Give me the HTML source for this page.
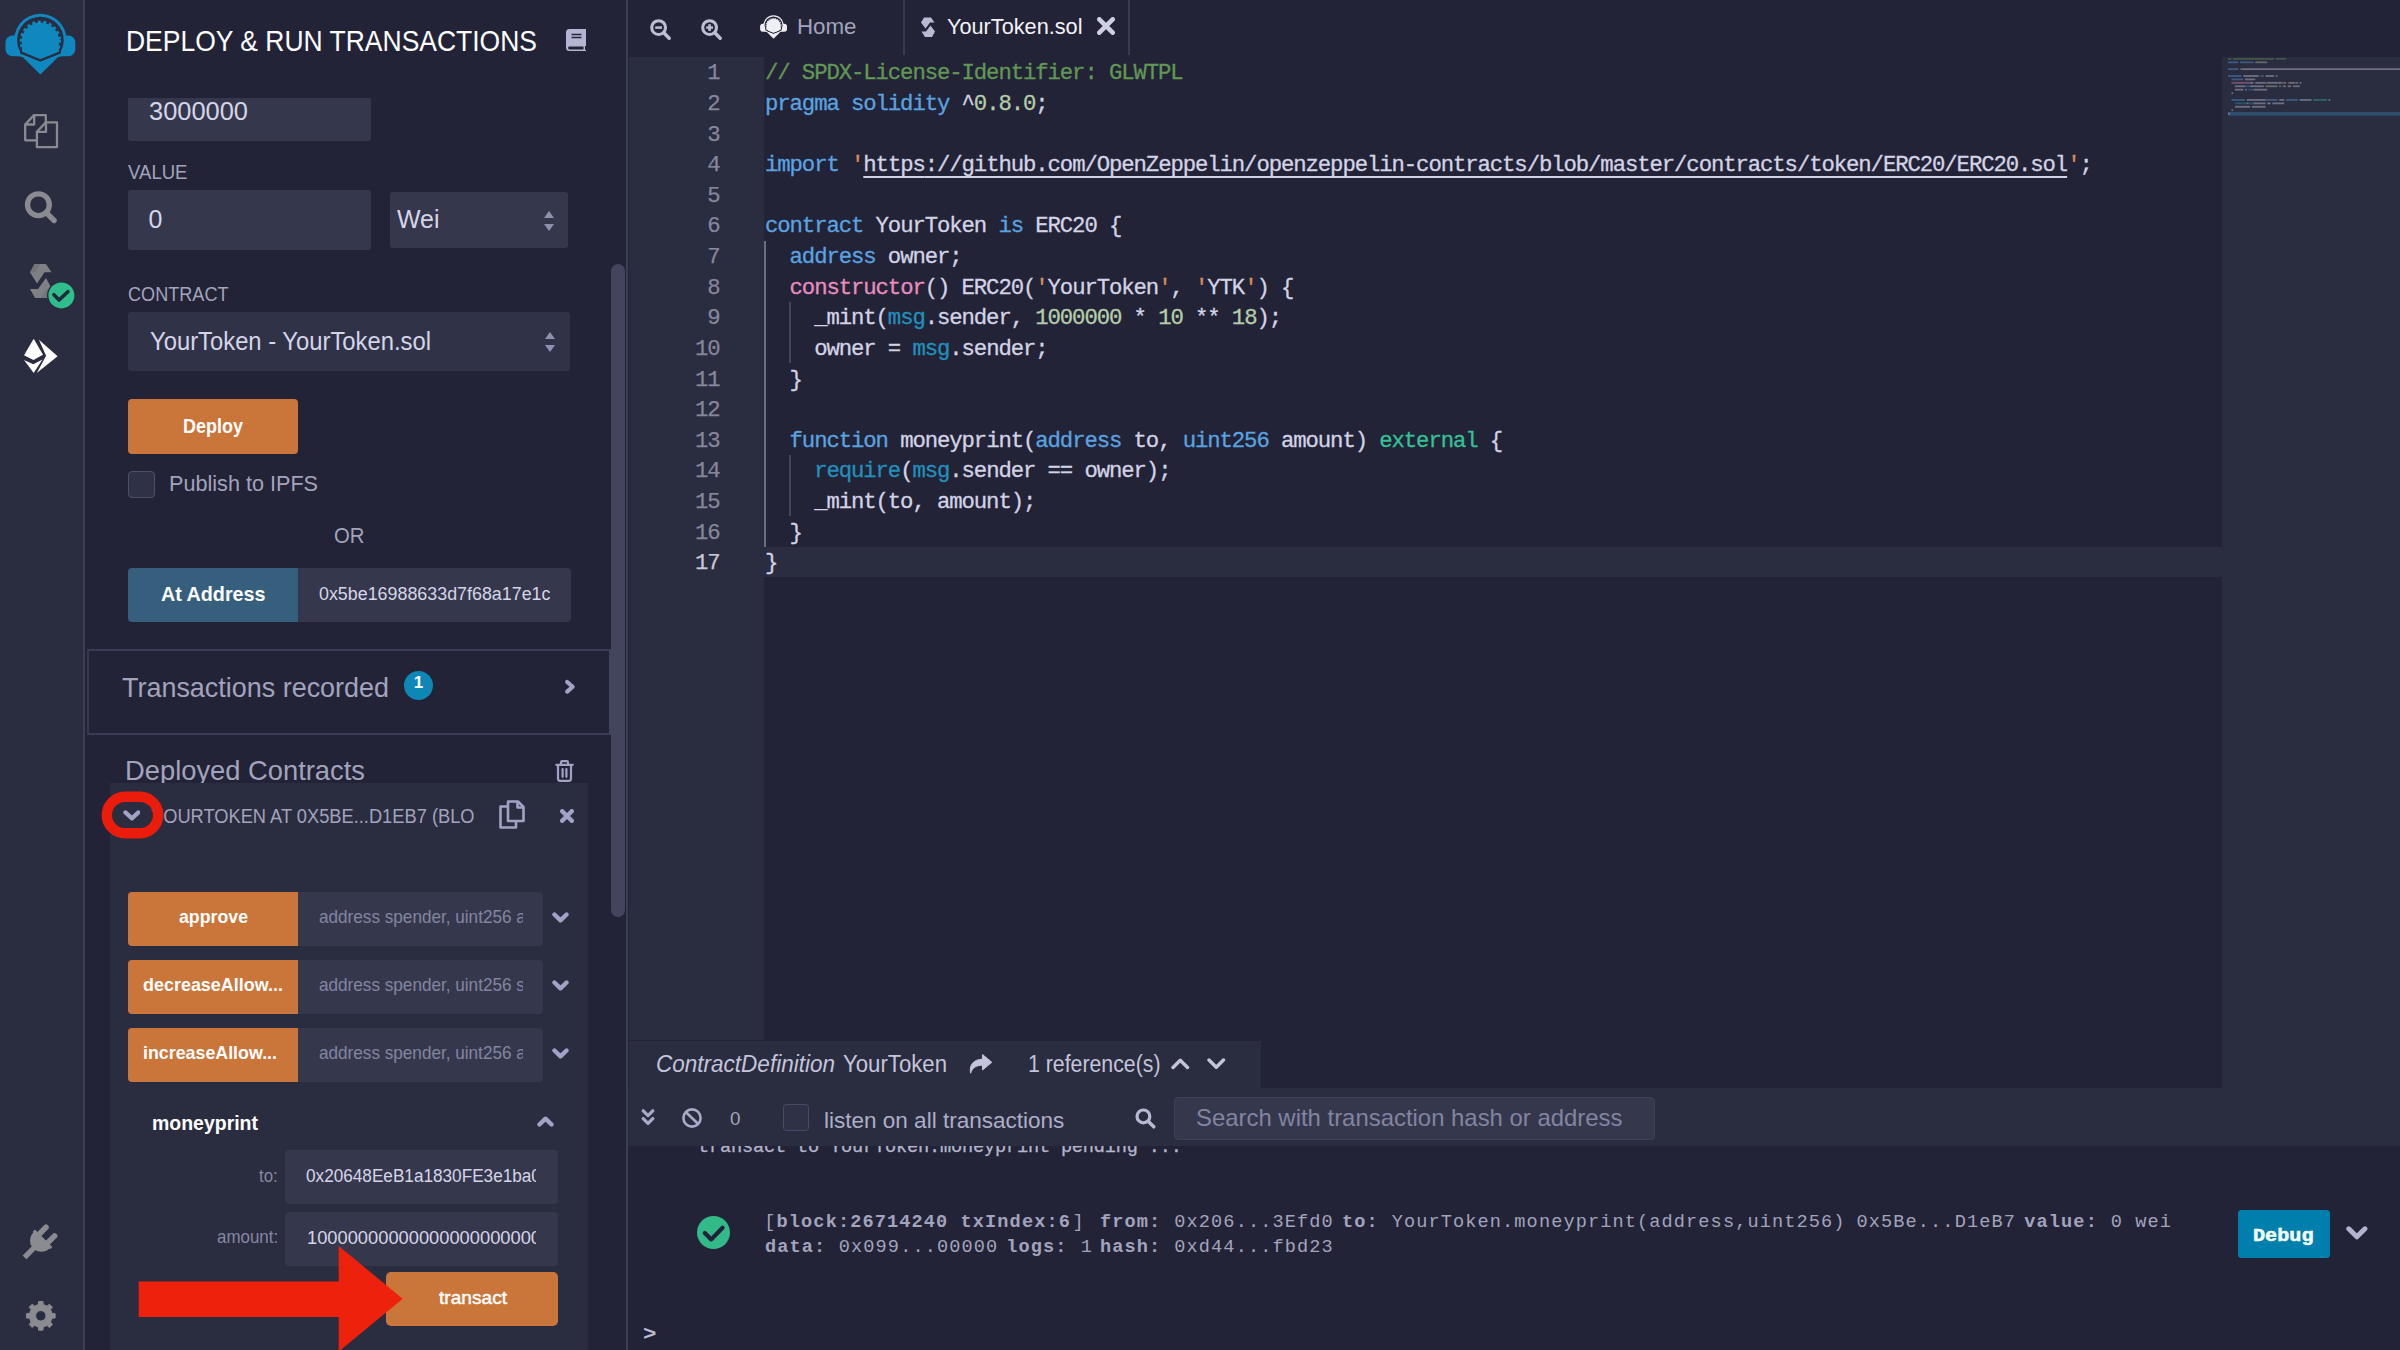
<!DOCTYPE html><html><head><meta charset="utf-8"><title>Remix</title><style>html,body{margin:0;padding:0;}body{width:2400px;height:1350px;overflow:hidden;background:#222336;position:relative;font-family:"Liberation Sans",sans-serif;}</style></head><body>
<div style="position:absolute;left:0px;top:0px;width:83px;height:1350px;background:#2a2c3f;"></div>
<div style="position:absolute;left:83px;top:0px;width:2px;height:1350px;background:#3b3e55;"></div>
<div style="position:absolute;left:626px;top:0px;width:2px;height:1350px;background:#3b3e55;"></div>
<div style="position:absolute;left:128px;top:98px;width:243px;height:43px;background:#35384c;border-radius:0 0 3px 3px;"></div>
<div id="t1" style="position:absolute;left:148.5px;top:111.34px;line-height:0;white-space:pre;font-family:'Liberation Sans', sans-serif;font-size:25px;color:#d5d5e9;font-weight:400;transform:scaleX(1.0172);transform-origin:0 0;">3000000</div>
<div id="t2" style="position:absolute;left:128px;top:172.07px;line-height:0;white-space:pre;font-family:'Liberation Sans', sans-serif;font-size:20px;color:#a2a3bd;font-weight:400;transform:scaleX(0.9281);transform-origin:0 0;">VALUE</div>
<div style="position:absolute;left:128px;top:190px;width:243px;height:60px;background:#35384c;border-radius:3px;"></div>
<div id="t3" style="position:absolute;left:148.5px;top:218.84px;line-height:0;white-space:pre;font-family:'Liberation Sans', sans-serif;font-size:25px;color:#d5d5e9;font-weight:400;">0</div>
<div style="position:absolute;left:390px;top:192px;width:178px;height:56px;background:#35384c;border-radius:3px;"></div>
<div id="t4" style="position:absolute;left:397px;top:218.84px;line-height:0;white-space:pre;font-family:'Liberation Sans', sans-serif;font-size:25px;color:#d5d5e9;font-weight:400;transform:scaleX(0.9974);transform-origin:0 0;">Wei</div>
<svg style="position:absolute;left:543px;top:209.5px;" width="12" height="22" viewBox="0 0 12 22"><path d="M6 1 L11 8 L1 8 Z M1 14 L11 14 L6 21 Z" fill="#8f90b0"/></svg>
<div id="t5" style="position:absolute;left:128px;top:294.07px;line-height:0;white-space:pre;font-family:'Liberation Sans', sans-serif;font-size:20px;color:#a2a3bd;font-weight:400;transform:scaleX(0.9045);transform-origin:0 0;">CONTRACT</div>
<div style="position:absolute;left:128px;top:312px;width:442px;height:59px;background:#303348;border-radius:3px;"></div>
<div id="t6" style="position:absolute;left:150px;top:340.84px;line-height:0;white-space:pre;font-family:'Liberation Sans', sans-serif;font-size:25px;color:#d5d5e9;font-weight:400;transform:scaleX(0.9521);transform-origin:0 0;">YourToken - YourToken.sol</div>
<svg style="position:absolute;left:543.5px;top:331px;" width="12" height="22" viewBox="0 0 12 22"><path d="M6 1 L11 8 L1 8 Z M1 14 L11 14 L6 21 Z" fill="#8f90b0"/></svg>
<div style="position:absolute;left:128px;top:399px;width:170px;height:54.5px;background:#ca7539;border-radius:4px;"></div>
<div id="t7" style="position:absolute;left:183px;top:425.54px;line-height:0;white-space:pre;font-family:'Liberation Sans', sans-serif;font-size:19.8px;color:#fff;font-weight:700;transform:scaleX(0.9097);transform-origin:0 0;">Deploy</div>
<div style="position:absolute;left:128px;top:471px;width:26.8px;height:26.8px;background:#2f3247;box-sizing:border-box;border:1.6px solid #4d506b;border-radius:4px;"></div>
<div id="t8" style="position:absolute;left:169.3px;top:484.41px;line-height:0;white-space:pre;font-family:'Liberation Sans', sans-serif;font-size:21.9px;color:#a2a3bd;font-weight:400;transform:scaleX(0.9876);transform-origin:0 0;">Publish to IPFS</div>
<div id="t9" style="position:absolute;left:333.5px;top:536.25px;line-height:0;white-space:pre;font-family:'Liberation Sans', sans-serif;font-size:21.8px;color:#a2a3bd;font-weight:400;transform:scaleX(0.9326);transform-origin:0 0;">OR</div>
<div style="position:absolute;left:128px;top:568px;width:170px;height:54px;background:#355f7d;border-radius:4px 0 0 4px;"></div>
<div id="t10" style="position:absolute;left:161.3px;top:594.02px;line-height:0;white-space:pre;font-family:'Liberation Sans', sans-serif;font-size:21px;color:#fff;font-weight:700;transform:scaleX(0.9393);transform-origin:0 0;">At Address</div>
<div style="position:absolute;left:298px;top:568px;width:272.5px;height:54px;background:#35384c;border-radius:0 4px 4px 0;"></div>
<div style="position:absolute;left:318px;top:568px;width:232px;height:54px;overflow:hidden;">
<div id="t11" style="position:absolute;left:0.7px;top:25.96px;line-height:0;white-space:pre;font-family:'Liberation Sans', sans-serif;font-size:18px;color:#d5d5e9;font-weight:400;transform:scaleX(0.9924);transform-origin:0 0;">0x5be16988633d7f68a17e1cd</div>
</div>
<div style="position:absolute;left:87px;top:649.1px;width:524.3px;height:86.2px;background:transparent;box-sizing:border-box;border-top:2.5px solid #3a3d55;border-bottom:2.5px solid #3a3d55;border-left:2px solid #353850;border-right:2px solid #42455d;"></div>
<div id="t12" style="position:absolute;left:122.3px;top:687.19px;line-height:0;white-space:pre;font-family:'Liberation Sans', sans-serif;font-size:28.3px;color:#a2a3bd;font-weight:400;transform:scaleX(0.9519);transform-origin:0 0;">Transactions recorded</div>
<div style="position:absolute;left:403.7px;top:670.8px;width:29.2px;height:29.2px;border-radius:50%;background:#0f87b6;"></div>
<div id="t13" style="position:absolute;left:413.8px;top:682.61px;line-height:0;white-space:pre;font-family:'Liberation Sans', sans-serif;font-size:17px;color:#fff;font-weight:700;">1</div>
<svg style="position:absolute;left:563px;top:678px;" width="14" height="18" viewBox="0 0 14 18"><path d="M4.2 4 L9.6 8.8 L4.2 13.6" fill="none" stroke="#a2a3c4" stroke-width="4.2" stroke-linecap="round" stroke-linejoin="round"/></svg>
<div id="t14" style="position:absolute;left:125px;top:771.14px;line-height:0;white-space:pre;font-family:'Liberation Sans', sans-serif;font-size:27.3px;color:#a2a3bd;font-weight:400;transform:scaleX(1.0011);transform-origin:0 0;">Deployed Contracts</div>
<svg style="position:absolute;left:555px;top:760px;" width="19" height="22" viewBox="0 0 19 22"><g fill="none" stroke="#a2a3c4" stroke-width="2.2" stroke-linejoin="round" stroke-linecap="round"><path d="M1.3 4.8 H17.7"/><path d="M6 4.5 V2.4 a1.2 1.2 0 0 1 1.2 -1.2 h4.6 a1.2 1.2 0 0 1 1.2 1.2 V4.5"/><path d="M3 5 V18.8 a2 2 0 0 0 2 2 h9 a2 2 0 0 0 2 -2 V5"/><path d="M7.6 9 V16.8 M11.4 9 V16.8"/></g></svg>
<div style="position:absolute;left:110px;top:783px;width:478px;height:567px;background:#2a2c3f;"></div>
<svg style="position:absolute;left:122.5px;top:809.8px;" width="17.8" height="11" viewBox="0 0 17.8 11"><path d="M2.4 2.4 L8.9 8.4 L15.4 2.4" fill="none" stroke="#a2a3c4" stroke-width="4.2" stroke-linecap="round" stroke-linejoin="round"/></svg>
<div id="t15" style="position:absolute;left:150.5px;top:815.57px;line-height:0;white-space:pre;font-family:'Liberation Sans', sans-serif;font-size:20px;color:#a2a3bd;font-weight:400;transform:scaleX(0.9133);transform-origin:0 0;">YOURTOKEN AT 0X5BE...D1EB7 (BLO</div>
<svg style="position:absolute;left:95px;top:785px;" width="75" height="60" viewBox="0 0 75 60"><rect x="11.8" y="11.7" width="51.4" height="36.6" rx="18.3" ry="18.3" fill="none" stroke="#ec1c0d" stroke-width="10.4"/></svg>
<svg style="position:absolute;left:499px;top:800px;" width="26" height="29" viewBox="0 0 26 29"><g fill="none" stroke="#a2a3c4" stroke-width="2.6" stroke-linejoin="round"><path d="M9 1.5 H19 L24.5 7 V21 H9 Z"/><path d="M18.5 1.5 V7.5 H24.5"/><path d="M9 6.5 H1.5 V27.5 H17 V21"/></g></svg>
<svg style="position:absolute;left:559.8px;top:808.8px;" width="14" height="14" viewBox="0 0 14 14"><path d="M2.2 2.2 L11.8 11.8 M11.8 2.2 L2.2 11.8" stroke="#a2a3c4" stroke-width="4.4" stroke-linecap="round"/></svg>
<div style="position:absolute;left:128px;top:891.5px;width:170px;height:54px;background:#ca7539;border-radius:4px 0 0 4px;"></div>
<div id="t16" style="position:absolute;left:179px;top:916.92px;line-height:0;white-space:pre;font-family:'Liberation Sans', sans-serif;font-size:19px;color:#fff;font-weight:700;transform:scaleX(0.9334);transform-origin:0 0;">approve</div>
<div style="position:absolute;left:298px;top:891.5px;width:245px;height:54px;background:#35384c;border-radius:0 4px 4px 0;"></div>
<div style="position:absolute;left:318px;top:891.5px;width:205px;height:54px;overflow:hidden;">
<div id="t17" style="position:absolute;left:1.2px;top:25.59px;line-height:0;white-space:pre;font-family:'Liberation Sans', sans-serif;font-size:18.5px;color:#8385a1;font-weight:400;transform:scaleX(0.9266);transform-origin:0 0;">address spender, uint256 am</div>
</div>
<svg style="position:absolute;left:551.8px;top:911.5px;" width="17" height="11" viewBox="0 0 17 11"><path d="M2.4499999999999997 2.4499999999999997 L8.5 8.35 L14.549999999999999 2.4499999999999997" fill="none" stroke="#a2a3c4" stroke-width="4.3" stroke-linecap="round" stroke-linejoin="round"/></svg>
<div style="position:absolute;left:128px;top:959.5px;width:170px;height:54px;background:#ca7539;border-radius:4px 0 0 4px;"></div>
<div id="t18" style="position:absolute;left:143px;top:984.92px;line-height:0;white-space:pre;font-family:'Liberation Sans', sans-serif;font-size:19px;color:#fff;font-weight:700;transform:scaleX(0.9446);transform-origin:0 0;">decreaseAllow...</div>
<div style="position:absolute;left:298px;top:959.5px;width:245px;height:54px;background:#35384c;border-radius:0 4px 4px 0;"></div>
<div style="position:absolute;left:318px;top:959.5px;width:205px;height:54px;overflow:hidden;">
<div id="t19" style="position:absolute;left:1.2px;top:25.59px;line-height:0;white-space:pre;font-family:'Liberation Sans', sans-serif;font-size:18.5px;color:#8385a1;font-weight:400;transform:scaleX(0.9266);transform-origin:0 0;">address spender, uint256 su</div>
</div>
<svg style="position:absolute;left:551.8px;top:979.5px;" width="17" height="11" viewBox="0 0 17 11"><path d="M2.4499999999999997 2.4499999999999997 L8.5 8.35 L14.549999999999999 2.4499999999999997" fill="none" stroke="#a2a3c4" stroke-width="4.3" stroke-linecap="round" stroke-linejoin="round"/></svg>
<div style="position:absolute;left:128px;top:1027.5px;width:170px;height:54px;background:#ca7539;border-radius:4px 0 0 4px;"></div>
<div id="t20" style="position:absolute;left:143px;top:1052.92px;line-height:0;white-space:pre;font-family:'Liberation Sans', sans-serif;font-size:19px;color:#fff;font-weight:700;transform:scaleX(0.9376);transform-origin:0 0;">increaseAllow...</div>
<div style="position:absolute;left:298px;top:1027.5px;width:245px;height:54px;background:#35384c;border-radius:0 4px 4px 0;"></div>
<div style="position:absolute;left:318px;top:1027.5px;width:205px;height:54px;overflow:hidden;">
<div id="t21" style="position:absolute;left:1.2px;top:25.59px;line-height:0;white-space:pre;font-family:'Liberation Sans', sans-serif;font-size:18.5px;color:#8385a1;font-weight:400;transform:scaleX(0.9264);transform-origin:0 0;">address spender, uint256 ad</div>
</div>
<svg style="position:absolute;left:551.8px;top:1047.5px;" width="17" height="11" viewBox="0 0 17 11"><path d="M2.4499999999999997 2.4499999999999997 L8.5 8.35 L14.549999999999999 2.4499999999999997" fill="none" stroke="#a2a3c4" stroke-width="4.3" stroke-linecap="round" stroke-linejoin="round"/></svg>
<div id="t22" style="position:absolute;left:152px;top:1122.57px;line-height:0;white-space:pre;font-family:'Liberation Sans', sans-serif;font-size:20px;color:#fff;font-weight:700;transform:scaleX(0.9733);transform-origin:0 0;">moneyprint</div>
<svg style="position:absolute;left:536.5px;top:1115.5px;" width="17" height="11" viewBox="0 0 17 11"><path d="M2.4499999999999997 8.549999999999999 L8.5 2.65 L14.549999999999999 8.549999999999999" fill="none" stroke="#a2a3c4" stroke-width="4.3" stroke-linecap="round" stroke-linejoin="round"/></svg>
<div id="t23" style="position:absolute;left:259.4px;top:1175.92px;line-height:0;white-space:pre;font-family:'Liberation Sans', sans-serif;font-size:19px;color:#8687a2;font-weight:400;transform:scaleX(0.8852);transform-origin:0 0;">to:</div>
<div style="position:absolute;left:285px;top:1150px;width:272.5px;height:54px;background:#35384c;border-radius:4px;"></div>
<div style="position:absolute;left:305px;top:1150px;width:230.8px;height:54px;overflow:hidden;">
<div id="t24" style="position:absolute;left:0.8px;top:26.26px;line-height:0;white-space:pre;font-family:'Liberation Sans', sans-serif;font-size:18px;color:#d5d5e9;font-weight:400;transform:scaleX(0.9540);transform-origin:0 0;">0x20648EeB1a1830FE3e1ba0</div>
</div>
<div id="t25" style="position:absolute;left:216.9px;top:1237.22px;line-height:0;white-space:pre;font-family:'Liberation Sans', sans-serif;font-size:19px;color:#8687a2;font-weight:400;transform:scaleX(0.8914);transform-origin:0 0;">amount:</div>
<div style="position:absolute;left:285px;top:1212px;width:272.5px;height:54px;background:#35384c;border-radius:4px;"></div>
<div style="position:absolute;left:305px;top:1212px;width:230.8px;height:54px;overflow:hidden;">
<div id="t26" style="position:absolute;left:1.8px;top:25.76px;line-height:0;white-space:pre;font-family:'Liberation Sans', sans-serif;font-size:18px;color:#d5d5e9;font-weight:400;transform:scaleX(1.0163);transform-origin:0 0;">10000000000000000000000</div>
</div>
<div style="position:absolute;left:386px;top:1272.3px;width:171.5px;height:54px;background:#ca7539;border-radius:5px;"></div>
<div id="t27" style="position:absolute;left:438.7px;top:1298.49px;line-height:0;white-space:pre;font-family:'Liberation Sans', sans-serif;font-size:18.2px;color:#fff;font-weight:400;transform:scaleX(1.0510);transform-origin:0 0;-webkit-text-stroke:0.45px #fff;">transact</div>
<svg style="position:absolute;left:130px;top:1240px;" width="280" height="110" viewBox="0 0 280 110"><path d="M8.7 41.5 H208.7 V6 L272.7 58.8 L208.7 111.6 V77 H8.7 Z" fill="#ee220c"/></svg>
<div style="position:absolute;left:611px;top:264px;width:13.9px;height:652.6px;background:#42455d;border-radius:7px;"></div>
<div style="position:absolute;left:85px;top:0px;width:541px;height:98px;background:#222336;"></div>
<div id="t28" style="position:absolute;left:126px;top:40.95px;line-height:0;white-space:pre;font-family:'Liberation Sans', sans-serif;font-size:29px;color:#fff;font-weight:400;transform:scaleX(0.9130);transform-origin:0 0;">DEPLOY &amp; RUN TRANSACTIONS</div>
<svg style="position:absolute;left:566px;top:29px;" width="20" height="22" viewBox="0 0 20 22"><path d="M3.5 0 H20 V17 H19 V21 H20 V22 H3.5 A3.5 3.5 0 0 1 0 18.5 V3.5 A3.5 3.5 0 0 1 3.5 0 Z" fill="#b4b5d2"/><path d="M5.5 5.5 H15.5 M5.5 8.5 H15.5" stroke="#222336" stroke-width="1.6"/><path d="M3.5 17.6 H17.5 V20.4 H3.5 A1.4 1.4 0 0 1 3.5 17.6 Z" fill="#222336"/></svg>
<svg style="position:absolute;left:0px;top:0px;" width="80" height="80" viewBox="0 0 80 80"><g transform="scale(1)"><g fill="#0e88bf"><path d="M12.5 35.5 H20 V56.3 H12.5 A7 7 0 0 1 5.5 49.3 V42.5 A7 7 0 0 1 12.5 35.5 Z"/><path d="M68.3 35.5 H60.8 V56.3 H68.3 A7 7 0 0 0 75.3 49.3 V42.5 A7 7 0 0 0 68.3 35.5 Z"/><path d="M15.2 47 A26.2 26.2 0 1 1 65.6 47 Z"/><path d="M17 55.8 L20.5 53.5 L40.4 61.6 L60.3 53.5 L63.8 55.8 L57.9 57.2 L40.4 74.4 L22.9 57.2 Z"/></g><clipPath id="lg0"><path d="M0 0 H80 V48 L62.5 52.6 L40.4 61.6 L18.3 52.6 L0 48 Z"/></clipPath><circle cx="40.4" cy="40" r="23.3" fill="#2a2c3f" clip-path="url(#lg0)"/><clipPath id="lc0"><path d="M0 0 H80 V46 L60.3 50.9 L40.4 58.9 L20.5 50.9 L0 46 Z"/></clipPath><g clip-path="url(#lc0)"><circle cx="40.4" cy="41.3" r="18.8" fill="#0e88bf"/><circle cx="40.4" cy="41.3" r="19.4" fill="none" stroke="#0e88bf" stroke-width="2.6" stroke-dasharray="2.9 2.7" transform="rotate(-4 40.4 41.3)"/><rect x="22" y="46" width="37" height="16" fill="#0e88bf"/></g></g></svg>
<svg style="position:absolute;left:20px;top:110px;" width="44" height="42" viewBox="0 0 44 42"><g fill="none" stroke="#8a8b90" stroke-width="2.3" stroke-linejoin="round" stroke-linecap="round"><path d="M5.2 14.5 L14 5.1 H25.8 V12.2 M16.5 30.3 H5.2 V14.5 H14.2 V5.1"/><path d="M16.9 21.8 L25.8 12.4 H37 V37.2 H16.9 Z"/><path d="M16.9 21.9 H26 V12.4"/></g></svg>
<svg style="position:absolute;left:20px;top:186px;" width="44" height="44" viewBox="0 0 44 44"><circle cx="18.4" cy="18.7" r="10.9" fill="none" stroke="#8a8b90" stroke-width="5.3"/><path d="M27 27.4 L34.1 34.5" stroke="#8a8b90" stroke-width="5.4" stroke-linecap="round"/></svg>
<svg style="position:absolute;left:24px;top:258px;" width="56" height="56" viewBox="0 0 56 56"><path d="M6 14.3 L10.5 6 H22 L27.5 14.3 H20.5 L13 25.5 Z" fill="#7f8086"/><path d="M6.3 14.3 L10.5 6 H16.2 L11.8 14.3Z" fill="#74757b"/><path d="M28 31 L23.5 40 H11 L6 31 H14 L22 20 Z" fill="#7f8086"/><path d="M27.7 31 L23.5 40 H17.3 L22 31Z" fill="#74757b"/><circle cx="37.4" cy="37.4" r="14.4" fill="#2a2c3f"/><circle cx="37.4" cy="37.4" r="13" fill="#30bd8c"/><path d="M29.9 36.7 L35.1 42 L43.9 33.7" fill="none" stroke="#1f2a38" stroke-width="3.6" stroke-linecap="round" stroke-linejoin="round"/></svg>
<svg style="position:absolute;left:20px;top:334px;" width="44" height="44" viewBox="0 0 44 44"><g fill="#fff"><path d="M13.7 4.7 L4 21.3 L13.5 26 L23 20.7 Z"/><path d="M4 26 L13.3 30.2 L22.5 25.4 L13.7 38.9 Z"/><path d="M18.9 5.7 L37.6 22.3 L16.8 38.9 L26.1 21.8 Z"/></g></svg>
<svg style="position:absolute;left:16px;top:1216px;" width="50" height="50" viewBox="0 0 50 50"><g transform="translate(26.3 23.6) rotate(45) scale(1.07)" fill="#8a8b90" stroke="none"><rect x="-8.3" y="-13.2" width="5.2" height="14" rx="2.6"/><rect x="3.1" y="-13.2" width="5.2" height="14" rx="2.6"/><path d="M-11.5 -1.8 H11.5 V1.2 H10.6 A10.6 10.6 0 0 1 -10.6 1.2 H-11.5 Z"/><rect x="-2.5" y="9" width="5" height="14.5"/></g></svg>
<svg style="position:absolute;left:20px;top:1295px;" width="42" height="42" viewBox="0 0 42 42"><path d="M18.38 9.56 L18.64 6.46 L22.96 6.46 L23.22 9.56 L27.04 11.14 L29.41 9.14 L32.46 12.19 L30.46 14.56 L32.04 18.38 L35.14 18.64 L35.14 22.96 L32.04 23.22 L30.46 27.04 L32.46 29.41 L29.41 32.46 L27.04 30.46 L23.22 32.04 L22.96 35.14 L18.64 35.14 L18.38 32.04 L14.56 30.46 L12.19 32.46 L9.14 29.41 L11.14 27.04 L9.56 23.22 L6.46 22.96 L6.46 18.64 L9.56 18.38 L11.14 14.56 L9.14 12.19 L12.19 9.14 L14.56 11.14 Z M15.600000000000001 20.8 a5.2 5.2 0 1 0 10.4 0 a5.2 5.2 0 1 0 -10.4 0 Z" fill="#8a8b90" fill-rule="evenodd" stroke="#8a8b90" stroke-width="1" stroke-linejoin="round"/></svg>
<svg style="position:absolute;left:649.7px;top:19.2px;" width="23" height="23" viewBox="0 0 23 23"><circle cx="8.6" cy="8.6" r="6.9" fill="none" stroke="#bdbdd6" stroke-width="3.1"/><path d="M13.8 13.8 L19.2 19.2" stroke="#bdbdd6" stroke-width="3.5" stroke-linecap="round"/><path d="M5.2 8.6 H12 " stroke="#bdbdd6" stroke-width="2.5"/></svg>
<svg style="position:absolute;left:700.8px;top:19.2px;" width="23" height="23" viewBox="0 0 23 23"><circle cx="8.6" cy="8.6" r="6.9" fill="none" stroke="#bdbdd6" stroke-width="3.1"/><path d="M13.8 13.8 L19.2 19.2" stroke="#bdbdd6" stroke-width="3.5" stroke-linecap="round"/><path d="M5.2 8.6 H12 " stroke="#bdbdd6" stroke-width="2.5"/><path d="M8.6 5.2 V12" stroke="#bdbdd6" stroke-width="2.5"/></svg>
<svg style="position:absolute;left:757.5px;top:9.5px;" width="30.8" height="30.8" viewBox="0 0 30.8 30.8"><g transform="scale(0.385)"><g fill="#eeeef5"><path d="M12.5 35.5 H20 V56.3 H12.5 A7 7 0 0 1 5.5 49.3 V42.5 A7 7 0 0 1 12.5 35.5 Z"/><path d="M68.3 35.5 H60.8 V56.3 H68.3 A7 7 0 0 0 75.3 49.3 V42.5 A7 7 0 0 0 68.3 35.5 Z"/><path d="M15.2 47 A26.2 26.2 0 1 1 65.6 47 Z"/><path d="M17 55.8 L20.5 53.5 L40.4 61.6 L60.3 53.5 L63.8 55.8 L57.9 57.2 L40.4 74.4 L22.9 57.2 Z"/></g><clipPath id="lg757"><path d="M0 0 H80 V48 L62.5 52.6 L40.4 61.6 L18.3 52.6 L0 48 Z"/></clipPath><circle cx="40.4" cy="40" r="23.3" fill="#222336" clip-path="url(#lg757)"/><clipPath id="lc757"><path d="M0 0 H80 V46 L60.3 50.9 L40.4 58.9 L20.5 50.9 L0 46 Z"/></clipPath><g clip-path="url(#lc757)"><circle cx="40.4" cy="41.3" r="18.8" fill="#eeeef5"/><circle cx="40.4" cy="41.3" r="19.4" fill="none" stroke="#eeeef5" stroke-width="2.6" stroke-dasharray="2.9 2.7" transform="rotate(-4 40.4 41.3)"/><rect x="22" y="46" width="37" height="16" fill="#eeeef5"/></g></g></svg>
<div id="t29" style="position:absolute;left:796.5px;top:26.57px;line-height:0;white-space:pre;font-family:'Liberation Sans', sans-serif;font-size:22.3px;color:#a2a3bd;font-weight:400;transform:scaleX(1.0003);transform-origin:0 0;">Home</div>
<div style="position:absolute;left:903.3px;top:0px;width:2px;height:55px;background:#383a50;"></div>
<div style="position:absolute;left:1128px;top:0px;width:2px;height:55px;background:#383a50;"></div>
<svg style="position:absolute;left:919px;top:16px;" width="18" height="23" viewBox="0 0 18 23"><g fill="#b9bad4"><path d="M2 6.5 L5 1.5 H12 L15.5 6.5 H11 L6.5 12.5 Z"/><path d="M16 15.5 L13 21 H6 L2.5 15.5 H7 L11.5 9.5 Z"/></g></svg>
<div id="t30" style="position:absolute;left:946.5px;top:26.57px;line-height:0;white-space:pre;font-family:'Liberation Sans', sans-serif;font-size:22.3px;color:#f2f2f8;font-weight:400;transform:scaleX(0.9731);transform-origin:0 0;">YourToken.sol</div>
<svg style="position:absolute;left:1096.5px;top:16.5px;" width="18" height="18" viewBox="0 0 18 18"><path d="M2.3 2.3 L15.7 15.7 M15.7 2.3 L2.3 15.7" stroke="#cfcfe2" stroke-width="4.6" stroke-linecap="round"/></svg>
<div style="position:absolute;left:629px;top:57.2px;width:134.6px;height:983.3px;background:#2a2c3f;"></div>
<div style="position:absolute;left:2222px;top:57.2px;width:178px;height:1030.8px;background:#2a2c3f;"></div>
<div style="position:absolute;left:764px;top:546.5px;width:1458px;height:30.5px;background:#2a2c3f;"></div>
<div id="t31" style="position:absolute;left:707.214px;top:73.35px;line-height:0;white-space:pre;font-family:'Liberation Mono', monospace;font-size:22.3px;color:#85879a;font-weight:400;letter-spacing:-1.0962300000000003px;-webkit-text-stroke:0.25px;">1</div>
<div id="t32" style="position:absolute;left:765px;top:73.35px;line-height:0;white-space:pre;font-family:'Liberation Mono', monospace;font-size:22.3px;color:#d3d3e6;font-weight:400;letter-spacing:-1.0962300000000003px;-webkit-text-stroke:0.3px;"><span style="color:#629755;">// SPDX-License-Identifier: GLWTPL</span></div>
<div id="t33" style="position:absolute;left:707.214px;top:103.98px;line-height:0;white-space:pre;font-family:'Liberation Mono', monospace;font-size:22.3px;color:#85879a;font-weight:400;letter-spacing:-1.0962300000000003px;-webkit-text-stroke:0.25px;">2</div>
<div id="t34" style="position:absolute;left:765px;top:103.98px;line-height:0;white-space:pre;font-family:'Liberation Mono', monospace;font-size:22.3px;color:#d3d3e6;font-weight:400;letter-spacing:-1.0962300000000003px;-webkit-text-stroke:0.3px;"><span style="color:#5aa3e0;">pragma solidity</span><span style="color:#d3d3e6;"> ^</span><span style="color:#b5cea8;">0.8.0</span><span style="color:#d3d3e6;">;</span></div>
<div id="t35" style="position:absolute;left:707.214px;top:134.60px;line-height:0;white-space:pre;font-family:'Liberation Mono', monospace;font-size:22.3px;color:#85879a;font-weight:400;letter-spacing:-1.0962300000000003px;-webkit-text-stroke:0.25px;">3</div>
<div id="t36" style="position:absolute;left:707.214px;top:165.23px;line-height:0;white-space:pre;font-family:'Liberation Mono', monospace;font-size:22.3px;color:#85879a;font-weight:400;letter-spacing:-1.0962300000000003px;-webkit-text-stroke:0.25px;">4</div>
<div id="t37" style="position:absolute;left:765px;top:165.23px;line-height:0;white-space:pre;font-family:'Liberation Mono', monospace;font-size:22.3px;color:#d3d3e6;font-weight:400;letter-spacing:-1.0962300000000003px;-webkit-text-stroke:0.3px;"><span style="color:#5aa3e0;">import</span><span style="color:#d3d3e6;"> </span><span style="color:#d98a5b;">&#x27;</span><span style="color:#d3d3e6;text-decoration-skip-ink:none;text-decoration:underline;text-decoration-thickness:1.6px;text-underline-offset:4.7px;">https</span><span style="color:#d3d3e6;text-decoration-skip-ink:none;text-decoration:underline;text-decoration-thickness:1.6px;text-underline-offset:4.7px;">://github.com/OpenZeppelin/openzeppelin-contracts/blob/master/contracts/token/ERC20/ERC20.sol</span><span style="color:#d98a5b;">&#x27;</span><span style="color:#d3d3e6;">;</span></div>
<div id="t38" style="position:absolute;left:707.214px;top:195.85px;line-height:0;white-space:pre;font-family:'Liberation Mono', monospace;font-size:22.3px;color:#85879a;font-weight:400;letter-spacing:-1.0962300000000003px;-webkit-text-stroke:0.25px;">5</div>
<div id="t39" style="position:absolute;left:707.214px;top:226.48px;line-height:0;white-space:pre;font-family:'Liberation Mono', monospace;font-size:22.3px;color:#85879a;font-weight:400;letter-spacing:-1.0962300000000003px;-webkit-text-stroke:0.25px;">6</div>
<div id="t40" style="position:absolute;left:765px;top:226.48px;line-height:0;white-space:pre;font-family:'Liberation Mono', monospace;font-size:22.3px;color:#d3d3e6;font-weight:400;letter-spacing:-1.0962300000000003px;-webkit-text-stroke:0.3px;"><span style="color:#5aa3e0;">contract</span><span style="color:#d3d3e6;"> YourToken </span><span style="color:#5aa3e0;">is</span><span style="color:#d3d3e6;"> ERC20 {</span></div>
<div id="t41" style="position:absolute;left:707.214px;top:257.10px;line-height:0;white-space:pre;font-family:'Liberation Mono', monospace;font-size:22.3px;color:#85879a;font-weight:400;letter-spacing:-1.0962300000000003px;-webkit-text-stroke:0.25px;">7</div>
<div id="t42" style="position:absolute;left:765px;top:257.10px;line-height:0;white-space:pre;font-family:'Liberation Mono', monospace;font-size:22.3px;color:#d3d3e6;font-weight:400;letter-spacing:-1.0962300000000003px;-webkit-text-stroke:0.3px;"><span style="color:#d3d3e6;">  </span><span style="color:#5aa3e0;">address</span><span style="color:#d3d3e6;"> owner;</span></div>
<div id="t43" style="position:absolute;left:707.214px;top:287.73px;line-height:0;white-space:pre;font-family:'Liberation Mono', monospace;font-size:22.3px;color:#85879a;font-weight:400;letter-spacing:-1.0962300000000003px;-webkit-text-stroke:0.25px;">8</div>
<div id="t44" style="position:absolute;left:765px;top:287.73px;line-height:0;white-space:pre;font-family:'Liberation Mono', monospace;font-size:22.3px;color:#d3d3e6;font-weight:400;letter-spacing:-1.0962300000000003px;-webkit-text-stroke:0.3px;"><span style="color:#d3d3e6;">  </span><span style="color:#e88dbf;">constructor</span><span style="color:#d3d3e6;">() ERC20(</span><span style="color:#d98a5b;">&#x27;</span><span style="color:#d3d3e6;">YourToken</span><span style="color:#d98a5b;">&#x27;</span><span style="color:#d3d3e6;">, </span><span style="color:#d98a5b;">&#x27;</span><span style="color:#d3d3e6;">YTK</span><span style="color:#d98a5b;">&#x27;</span><span style="color:#d3d3e6;">) {</span></div>
<div id="t45" style="position:absolute;left:707.214px;top:318.35px;line-height:0;white-space:pre;font-family:'Liberation Mono', monospace;font-size:22.3px;color:#85879a;font-weight:400;letter-spacing:-1.0962300000000003px;-webkit-text-stroke:0.25px;">9</div>
<div id="t46" style="position:absolute;left:765px;top:318.35px;line-height:0;white-space:pre;font-family:'Liberation Mono', monospace;font-size:22.3px;color:#d3d3e6;font-weight:400;letter-spacing:-1.0962300000000003px;-webkit-text-stroke:0.3px;"><span style="color:#d3d3e6;">    _mint(</span><span style="color:#2290bc;">msg</span><span style="color:#d3d3e6;">.sender, </span><span style="color:#b5cea8;">1000000</span><span style="color:#d3d3e6;"> * </span><span style="color:#b5cea8;">10</span><span style="color:#d3d3e6;"> ** </span><span style="color:#b5cea8;">18</span><span style="color:#d3d3e6;">);</span></div>
<div id="t47" style="position:absolute;left:694.928px;top:348.98px;line-height:0;white-space:pre;font-family:'Liberation Mono', monospace;font-size:22.3px;color:#85879a;font-weight:400;letter-spacing:-1.0962300000000003px;-webkit-text-stroke:0.25px;">10</div>
<div id="t48" style="position:absolute;left:765px;top:348.98px;line-height:0;white-space:pre;font-family:'Liberation Mono', monospace;font-size:22.3px;color:#d3d3e6;font-weight:400;letter-spacing:-1.0962300000000003px;-webkit-text-stroke:0.3px;"><span style="color:#d3d3e6;">    owner = </span><span style="color:#2290bc;">msg</span><span style="color:#d3d3e6;">.sender;</span></div>
<div id="t49" style="position:absolute;left:694.928px;top:379.60px;line-height:0;white-space:pre;font-family:'Liberation Mono', monospace;font-size:22.3px;color:#85879a;font-weight:400;letter-spacing:-1.0962300000000003px;-webkit-text-stroke:0.25px;">11</div>
<div id="t50" style="position:absolute;left:765px;top:379.60px;line-height:0;white-space:pre;font-family:'Liberation Mono', monospace;font-size:22.3px;color:#d3d3e6;font-weight:400;letter-spacing:-1.0962300000000003px;-webkit-text-stroke:0.3px;"><span style="color:#d3d3e6;">  }</span></div>
<div id="t51" style="position:absolute;left:694.928px;top:410.23px;line-height:0;white-space:pre;font-family:'Liberation Mono', monospace;font-size:22.3px;color:#85879a;font-weight:400;letter-spacing:-1.0962300000000003px;-webkit-text-stroke:0.25px;">12</div>
<div id="t52" style="position:absolute;left:694.928px;top:440.85px;line-height:0;white-space:pre;font-family:'Liberation Mono', monospace;font-size:22.3px;color:#85879a;font-weight:400;letter-spacing:-1.0962300000000003px;-webkit-text-stroke:0.25px;">13</div>
<div id="t53" style="position:absolute;left:765px;top:440.85px;line-height:0;white-space:pre;font-family:'Liberation Mono', monospace;font-size:22.3px;color:#d3d3e6;font-weight:400;letter-spacing:-1.0962300000000003px;-webkit-text-stroke:0.3px;"><span style="color:#d3d3e6;">  </span><span style="color:#5aa3e0;">function</span><span style="color:#d3d3e6;"> moneyprint(</span><span style="color:#5aa3e0;">address</span><span style="color:#d3d3e6;"> to, </span><span style="color:#5aa3e0;">uint256</span><span style="color:#d3d3e6;"> amount) </span><span style="color:#35c196;">external</span><span style="color:#d3d3e6;"> {</span></div>
<div id="t54" style="position:absolute;left:694.928px;top:471.48px;line-height:0;white-space:pre;font-family:'Liberation Mono', monospace;font-size:22.3px;color:#85879a;font-weight:400;letter-spacing:-1.0962300000000003px;-webkit-text-stroke:0.25px;">14</div>
<div id="t55" style="position:absolute;left:765px;top:471.48px;line-height:0;white-space:pre;font-family:'Liberation Mono', monospace;font-size:22.3px;color:#d3d3e6;font-weight:400;letter-spacing:-1.0962300000000003px;-webkit-text-stroke:0.3px;"><span style="color:#d3d3e6;">    </span><span style="color:#2290bc;">require</span><span style="color:#d3d3e6;">(</span><span style="color:#2290bc;">msg</span><span style="color:#d3d3e6;">.sender == owner);</span></div>
<div id="t56" style="position:absolute;left:694.928px;top:502.10px;line-height:0;white-space:pre;font-family:'Liberation Mono', monospace;font-size:22.3px;color:#85879a;font-weight:400;letter-spacing:-1.0962300000000003px;-webkit-text-stroke:0.25px;">15</div>
<div id="t57" style="position:absolute;left:765px;top:502.10px;line-height:0;white-space:pre;font-family:'Liberation Mono', monospace;font-size:22.3px;color:#d3d3e6;font-weight:400;letter-spacing:-1.0962300000000003px;-webkit-text-stroke:0.3px;"><span style="color:#d3d3e6;">    _mint(to, amount);</span></div>
<div id="t58" style="position:absolute;left:694.928px;top:532.73px;line-height:0;white-space:pre;font-family:'Liberation Mono', monospace;font-size:22.3px;color:#85879a;font-weight:400;letter-spacing:-1.0962300000000003px;-webkit-text-stroke:0.25px;">16</div>
<div id="t59" style="position:absolute;left:765px;top:532.73px;line-height:0;white-space:pre;font-family:'Liberation Mono', monospace;font-size:22.3px;color:#d3d3e6;font-weight:400;letter-spacing:-1.0962300000000003px;-webkit-text-stroke:0.3px;"><span style="color:#d3d3e6;">  }</span></div>
<div id="t60" style="position:absolute;left:694.928px;top:563.35px;line-height:0;white-space:pre;font-family:'Liberation Mono', monospace;font-size:22.3px;color:#c9c9d6;font-weight:400;letter-spacing:-1.0962300000000003px;-webkit-text-stroke:0.25px;">17</div>
<div id="t61" style="position:absolute;left:765px;top:563.35px;line-height:0;white-space:pre;font-family:'Liberation Mono', monospace;font-size:22.3px;color:#d3d3e6;font-weight:400;letter-spacing:-1.0962300000000003px;-webkit-text-stroke:0.3px;"><span style="color:#d3d3e6;">}</span></div>
<div style="position:absolute;left:764.4px;top:240.55px;width:1.6px;height:306.25px;background:#6b6d84;"></div>
<div style="position:absolute;left:789px;top:301.8px;width:1.6px;height:61.25px;background:#43455b;"></div>
<div style="position:absolute;left:789px;top:454.925px;width:1.6px;height:61.25px;background:#43455b;"></div>
<svg style="position:absolute;left:2222px;top:56.7px;" width="178" height="70" viewBox="0 0 178 70"><rect x="6" y="55.02" width="172" height="3.72" fill="#2f4f6e"/><rect x="6.00" y="1.00" width="3.41" height="1.8" fill="#629755" opacity="0.4"/><rect x="11.12" y="1.00" width="40.92" height="1.8" fill="#629755" opacity="0.4"/><rect x="53.74" y="1.00" width="10.23" height="1.8" fill="#629755" opacity="0.4"/><rect x="6.00" y="4.42" width="10.23" height="1.8" fill="#5aa3e0" opacity="0.4"/><rect x="17.94" y="4.42" width="13.64" height="1.8" fill="#5aa3e0" opacity="0.4"/><rect x="33.28" y="4.42" width="1.71" height="1.8" fill="#d3d3e6" opacity="0.4"/><rect x="34.98" y="4.42" width="8.53" height="1.8" fill="#b5cea8" opacity="0.4"/><rect x="43.51" y="4.42" width="1.71" height="1.8" fill="#d3d3e6" opacity="0.4"/><rect x="6.00" y="11.26" width="10.23" height="1.8" fill="#5aa3e0" opacity="0.4"/><rect x="17.94" y="11.26" width="1.71" height="1.8" fill="#d98a5b" opacity="0.4"/><rect x="19.64" y="11.26" width="8.53" height="1.8" fill="#d3d3e6" opacity="0.4"/><rect x="28.16" y="11.26" width="149.84" height="1.8" fill="#d3d3e6" opacity="0.4"/><rect x="6.00" y="18.10" width="13.64" height="1.8" fill="#5aa3e0" opacity="0.4"/><rect x="21.34" y="18.10" width="15.35" height="1.8" fill="#d3d3e6" opacity="0.4"/><rect x="38.40" y="18.10" width="3.41" height="1.8" fill="#5aa3e0" opacity="0.4"/><rect x="43.51" y="18.10" width="8.53" height="1.8" fill="#d3d3e6" opacity="0.4"/><rect x="53.74" y="18.10" width="1.71" height="1.8" fill="#d3d3e6" opacity="0.4"/><rect x="9.41" y="21.52" width="11.94" height="1.8" fill="#5aa3e0" opacity="0.4"/><rect x="23.05" y="21.52" width="10.23" height="1.8" fill="#d3d3e6" opacity="0.4"/><rect x="9.41" y="24.94" width="18.76" height="1.8" fill="#e88dbf" opacity="0.4"/><rect x="28.16" y="24.94" width="3.41" height="1.8" fill="#d3d3e6" opacity="0.4"/><rect x="33.28" y="24.94" width="10.23" height="1.8" fill="#d3d3e6" opacity="0.4"/><rect x="43.51" y="24.94" width="1.71" height="1.8" fill="#d98a5b" opacity="0.4"/><rect x="45.22" y="24.94" width="15.35" height="1.8" fill="#d3d3e6" opacity="0.4"/><rect x="60.56" y="24.94" width="1.71" height="1.8" fill="#d98a5b" opacity="0.4"/><rect x="62.27" y="24.94" width="1.71" height="1.8" fill="#d3d3e6" opacity="0.4"/><rect x="65.68" y="24.94" width="1.71" height="1.8" fill="#d98a5b" opacity="0.4"/><rect x="67.38" y="24.94" width="5.12" height="1.8" fill="#d3d3e6" opacity="0.4"/><rect x="72.50" y="24.94" width="1.71" height="1.8" fill="#d98a5b" opacity="0.4"/><rect x="74.20" y="24.94" width="1.71" height="1.8" fill="#d3d3e6" opacity="0.4"/><rect x="77.61" y="24.94" width="1.71" height="1.8" fill="#d3d3e6" opacity="0.4"/><rect x="12.82" y="28.36" width="10.23" height="1.8" fill="#d3d3e6" opacity="0.4"/><rect x="23.05" y="28.36" width="5.12" height="1.8" fill="#2290bc" opacity="0.4"/><rect x="28.16" y="28.36" width="13.64" height="1.8" fill="#d3d3e6" opacity="0.4"/><rect x="43.51" y="28.36" width="11.94" height="1.8" fill="#b5cea8" opacity="0.4"/><rect x="57.15" y="28.36" width="1.71" height="1.8" fill="#d3d3e6" opacity="0.4"/><rect x="60.56" y="28.36" width="3.41" height="1.8" fill="#b5cea8" opacity="0.4"/><rect x="65.68" y="28.36" width="3.41" height="1.8" fill="#d3d3e6" opacity="0.4"/><rect x="70.79" y="28.36" width="3.41" height="1.8" fill="#b5cea8" opacity="0.4"/><rect x="74.20" y="28.36" width="3.41" height="1.8" fill="#d3d3e6" opacity="0.4"/><rect x="12.82" y="31.78" width="8.53" height="1.8" fill="#d3d3e6" opacity="0.4"/><rect x="23.05" y="31.78" width="1.71" height="1.8" fill="#d3d3e6" opacity="0.4"/><rect x="26.46" y="31.78" width="5.12" height="1.8" fill="#2290bc" opacity="0.4"/><rect x="31.58" y="31.78" width="13.64" height="1.8" fill="#d3d3e6" opacity="0.4"/><rect x="9.41" y="35.20" width="1.71" height="1.8" fill="#d3d3e6" opacity="0.4"/><rect x="9.41" y="42.04" width="13.64" height="1.8" fill="#5aa3e0" opacity="0.4"/><rect x="24.76" y="42.04" width="18.76" height="1.8" fill="#d3d3e6" opacity="0.4"/><rect x="43.51" y="42.04" width="11.94" height="1.8" fill="#5aa3e0" opacity="0.4"/><rect x="57.15" y="42.04" width="5.12" height="1.8" fill="#d3d3e6" opacity="0.4"/><rect x="63.97" y="42.04" width="11.94" height="1.8" fill="#5aa3e0" opacity="0.4"/><rect x="77.61" y="42.04" width="11.94" height="1.8" fill="#d3d3e6" opacity="0.4"/><rect x="91.25" y="42.04" width="13.64" height="1.8" fill="#35c196" opacity="0.4"/><rect x="106.59" y="42.04" width="1.71" height="1.8" fill="#d3d3e6" opacity="0.4"/><rect x="12.82" y="45.46" width="11.94" height="1.8" fill="#2290bc" opacity="0.4"/><rect x="24.76" y="45.46" width="1.71" height="1.8" fill="#d3d3e6" opacity="0.4"/><rect x="26.46" y="45.46" width="5.12" height="1.8" fill="#2290bc" opacity="0.4"/><rect x="31.58" y="45.46" width="11.94" height="1.8" fill="#d3d3e6" opacity="0.4"/><rect x="45.22" y="45.46" width="3.41" height="1.8" fill="#d3d3e6" opacity="0.4"/><rect x="50.33" y="45.46" width="11.94" height="1.8" fill="#d3d3e6" opacity="0.4"/><rect x="12.82" y="48.88" width="15.35" height="1.8" fill="#d3d3e6" opacity="0.4"/><rect x="29.87" y="48.88" width="13.64" height="1.8" fill="#d3d3e6" opacity="0.4"/><rect x="9.41" y="52.30" width="1.71" height="1.8" fill="#d3d3e6" opacity="0.4"/><rect x="6.00" y="55.72" width="1.71" height="1.8" fill="#d3d3e6" opacity="0.4"/></svg>
<div style="position:absolute;left:629px;top:1040.5px;width:631.5px;height:47.5px;background:#2a2c3f;"></div>
<div id="t62" style="position:absolute;left:655.5px;top:1064.03px;line-height:0;white-space:pre;font-family:'Liberation Sans', sans-serif;font-size:23px;color:#c4c5dc;font-weight:400;font-style:italic;transform:scaleX(0.9791);transform-origin:0 0;">ContractDefinition</div>
<div id="t63" style="position:absolute;left:843px;top:1064.03px;line-height:0;white-space:pre;font-family:'Liberation Sans', sans-serif;font-size:23px;color:#c4c5dc;font-weight:400;transform:scaleX(0.9642);transform-origin:0 0;">YourToken</div>
<svg style="position:absolute;left:968px;top:1053px;" width="25" height="22" viewBox="0 0 25 22"><path d="M14.5 1.5 L23.8 9.3 L14.5 17 V12.3 C8 12.3 4.5 14.5 2.6 20.2 C1 11.5 6 6.4 14.5 6.2 Z" fill="#c4c5dc" stroke="#c4c5dc" stroke-width="1" stroke-linejoin="round"/></svg>
<div id="t64" style="position:absolute;left:1027.5px;top:1064.03px;line-height:0;white-space:pre;font-family:'Liberation Sans', sans-serif;font-size:23px;color:#c4c5dc;font-weight:400;transform:scaleX(0.9255);transform-origin:0 0;">1 reference(s)</div>
<svg style="position:absolute;left:1171px;top:1058px;" width="18.5" height="11.5" viewBox="0 0 18.5 11.5"><path d="M2.0 9.5 L9.25 2.2 L16.5 9.5" fill="none" stroke="#c4c5dc" stroke-width="3.4" stroke-linecap="round" stroke-linejoin="round"/></svg>
<svg style="position:absolute;left:1207.3px;top:1058.3px;" width="18.5" height="11.5" viewBox="0 0 18.5 11.5"><path d="M2.0 2.0 L9.25 9.3 L16.5 2.0" fill="none" stroke="#c4c5dc" stroke-width="3.4" stroke-linecap="round" stroke-linejoin="round"/></svg>
<div style="position:absolute;left:628px;top:1088px;width:1772px;height:58px;background:#2a2c3f;"></div>
<svg style="position:absolute;left:640px;top:1108.3px;" width="16" height="20" viewBox="0 0 16 20"><path d="M3.2 2.8 L8 7.6 L12.8 2.8 M3.2 10.6 L8 15.4 L12.8 10.6" fill="none" stroke="#a9aac7" stroke-width="3.3" stroke-linecap="round" stroke-linejoin="round"/></svg>
<svg style="position:absolute;left:681px;top:1106.6px;" width="22" height="22" viewBox="0 0 22 22"><circle cx="11" cy="11" r="8.6" fill="none" stroke="#a9aac7" stroke-width="2.6"/><path d="M5 5.2 L17 16.8" stroke="#a9aac7" stroke-width="2.6"/></svg>
<div id="t65" style="position:absolute;left:730px;top:1118.62px;line-height:0;white-space:pre;font-family:'Liberation Sans', sans-serif;font-size:19px;color:#a2a3bd;font-weight:400;transform:scaleX(0.9926);transform-origin:0 0;">0</div>
<div style="position:absolute;left:782.5px;top:1104.2px;width:26.6px;height:26.8px;background:#2f3247;box-sizing:border-box;border:1.6px solid #484b65;border-radius:3.5px;"></div>
<div id="t66" style="position:absolute;left:824.2px;top:1121.28px;line-height:0;white-space:pre;font-family:'Liberation Sans', sans-serif;font-size:21.7px;color:#adaec8;font-weight:400;transform:scaleX(1.0382);transform-origin:0 0;">listen on all transactions</div>
<svg style="position:absolute;left:1135px;top:1108px;" width="22" height="22" viewBox="0 0 22 22"><circle cx="8.4" cy="8.4" r="6.4" fill="none" stroke="#b7b8d2" stroke-width="3.2"/><path d="M13.4 13.4 L18.8 18.8" stroke="#b7b8d2" stroke-width="3.6" stroke-linecap="round"/></svg>
<div style="position:absolute;left:1173.5px;top:1096.5px;width:481px;height:43.5px;background:#35384c;box-sizing:border-box;border:1.5px solid #3d4058;border-radius:4px;"></div>
<div id="t67" style="position:absolute;left:1196px;top:1117.68px;line-height:0;white-space:pre;font-family:'Liberation Sans', sans-serif;font-size:24px;color:#8284a1;font-weight:400;transform:scaleX(0.9959);transform-origin:0 0;">Search with transaction hash or address</div>
<div style="position:absolute;left:628px;top:1146px;width:1772px;height:40px;overflow:hidden;">
<div id="t68" style="position:absolute;left:70px;top:2.34px;line-height:0;white-space:pre;font-family:'Liberation Mono', monospace;font-size:18.6px;color:#b4b5cc;font-weight:400;letter-spacing:-0.16186000000000078px;-webkit-text-stroke:0.3px;">transact to YourToken.moneyprint pending ...</div>
</div>
<div style="position:absolute;left:696.6px;top:1215.8px;width:33.4px;height:33.4px;border-radius:50%;background:#32ba89;"></div>
<svg style="position:absolute;left:696.6px;top:1215.8px;" width="33.4" height="33.4" viewBox="0 0 33.4 33.4"><path d="M7.8 17 L14.3 23.4 L25.6 11.8" fill="none" stroke="#222336" stroke-width="4.2" stroke-linecap="round" stroke-linejoin="round"/></svg>
<div id="t69" style="position:absolute;left:764.3px;top:1222.84px;line-height:0;white-space:pre;font-family:'Liberation Mono', monospace;font-size:18.6px;color:#a2a3bd;font-weight:400;letter-spacing:1.1081399999999988px;">[</div>
<div id="t70" style="position:absolute;left:776.5699999999999px;top:1222.84px;line-height:0;white-space:pre;font-family:'Liberation Mono', monospace;font-size:18.6px;color:#a2a3bd;font-weight:700;letter-spacing:1.1081399999999988px;">block:26714240 txIndex:6</div>
<div id="t71" style="position:absolute;left:1072.55px;top:1222.84px;line-height:0;white-space:pre;font-family:'Liberation Mono', monospace;font-size:18.6px;color:#a2a3bd;font-weight:400;letter-spacing:1.1081399999999988px;">]</div>
<div id="t72" style="position:absolute;left:1100px;top:1222.84px;line-height:0;white-space:pre;font-family:'Liberation Mono', monospace;font-size:18.6px;color:#a2a3bd;font-weight:700;letter-spacing:1.1081399999999988px;">from:</div>
<div id="t73" style="position:absolute;left:1174.3px;top:1222.84px;line-height:0;white-space:pre;font-family:'Liberation Mono', monospace;font-size:18.6px;color:#a2a3bd;font-weight:400;letter-spacing:1.1081399999999988px;">0x206...3Efd0</div>
<div id="t74" style="position:absolute;left:1342px;top:1222.84px;line-height:0;white-space:pre;font-family:'Liberation Mono', monospace;font-size:18.6px;color:#a2a3bd;font-weight:700;letter-spacing:1.1081399999999988px;">to:</div>
<div id="t75" style="position:absolute;left:1391.7px;top:1222.84px;line-height:0;white-space:pre;font-family:'Liberation Mono', monospace;font-size:18.6px;color:#a2a3bd;font-weight:400;letter-spacing:1.1081399999999988px;">YourToken.moneyprint(address,uint256)</div>
<div id="t76" style="position:absolute;left:1856.5px;top:1222.84px;line-height:0;white-space:pre;font-family:'Liberation Mono', monospace;font-size:18.6px;color:#a2a3bd;font-weight:400;letter-spacing:1.1081399999999988px;">0x5Be...D1eB7</div>
<div id="t77" style="position:absolute;left:2024.3px;top:1222.84px;line-height:0;white-space:pre;font-family:'Liberation Mono', monospace;font-size:18.6px;color:#a2a3bd;font-weight:700;letter-spacing:1.1081399999999988px;">value:</div>
<div id="t78" style="position:absolute;left:2110.8px;top:1222.84px;line-height:0;white-space:pre;font-family:'Liberation Mono', monospace;font-size:18.6px;color:#a2a3bd;font-weight:400;letter-spacing:1.1081399999999988px;">0 wei</div>
<div id="t79" style="position:absolute;left:765px;top:1247.84px;line-height:0;white-space:pre;font-family:'Liberation Mono', monospace;font-size:18.6px;color:#a2a3bd;font-weight:700;letter-spacing:1.1081399999999988px;">data:</div>
<div id="t80" style="position:absolute;left:838.8px;top:1247.84px;line-height:0;white-space:pre;font-family:'Liberation Mono', monospace;font-size:18.6px;color:#a2a3bd;font-weight:400;letter-spacing:1.1081399999999988px;">0x099...00000</div>
<div id="t81" style="position:absolute;left:1006.3px;top:1247.84px;line-height:0;white-space:pre;font-family:'Liberation Mono', monospace;font-size:18.6px;color:#a2a3bd;font-weight:700;letter-spacing:1.1081399999999988px;">logs:</div>
<div id="t82" style="position:absolute;left:1080.8px;top:1247.84px;line-height:0;white-space:pre;font-family:'Liberation Mono', monospace;font-size:18.6px;color:#a2a3bd;font-weight:400;letter-spacing:1.1081399999999988px;">1</div>
<div id="t83" style="position:absolute;left:1100px;top:1247.84px;line-height:0;white-space:pre;font-family:'Liberation Mono', monospace;font-size:18.6px;color:#a2a3bd;font-weight:700;letter-spacing:1.1081399999999988px;">hash:</div>
<div id="t84" style="position:absolute;left:1174.3px;top:1247.84px;line-height:0;white-space:pre;font-family:'Liberation Mono', monospace;font-size:18.6px;color:#a2a3bd;font-weight:400;letter-spacing:1.1081399999999988px;">0xd44...fbd23</div>
<div style="position:absolute;left:2237.8px;top:1210px;width:92px;height:48px;background:#007fac;border-radius:3.5px;"></div>
<div id="t85" style="position:absolute;left:2253.2px;top:1236.20px;line-height:0;white-space:pre;font-family:'Liberation Mono', monospace;font-size:18px;color:#f4feff;font-weight:700;transform:scaleX(1.1200);transform-origin:0 0;-webkit-text-stroke:0.5px;">Debug</div>
<svg style="position:absolute;left:2346.3px;top:1225.8px;" width="21.7" height="13.8" viewBox="0 0 21.7 13.8"><path d="M2.75 2.75 L10.85 10.850000000000001 L18.95 2.75" fill="none" stroke="#b3b4d2" stroke-width="4.9" stroke-linecap="round" stroke-linejoin="round"/></svg>
<div id="t86" style="position:absolute;left:642.5px;top:1334.80px;line-height:0;white-space:pre;font-family:'Liberation Mono', monospace;font-size:19.5px;color:#bcbdd6;font-weight:700;transform:scaleX(1.1535);transform-origin:0 0;">&gt;</div>
</body></html>
